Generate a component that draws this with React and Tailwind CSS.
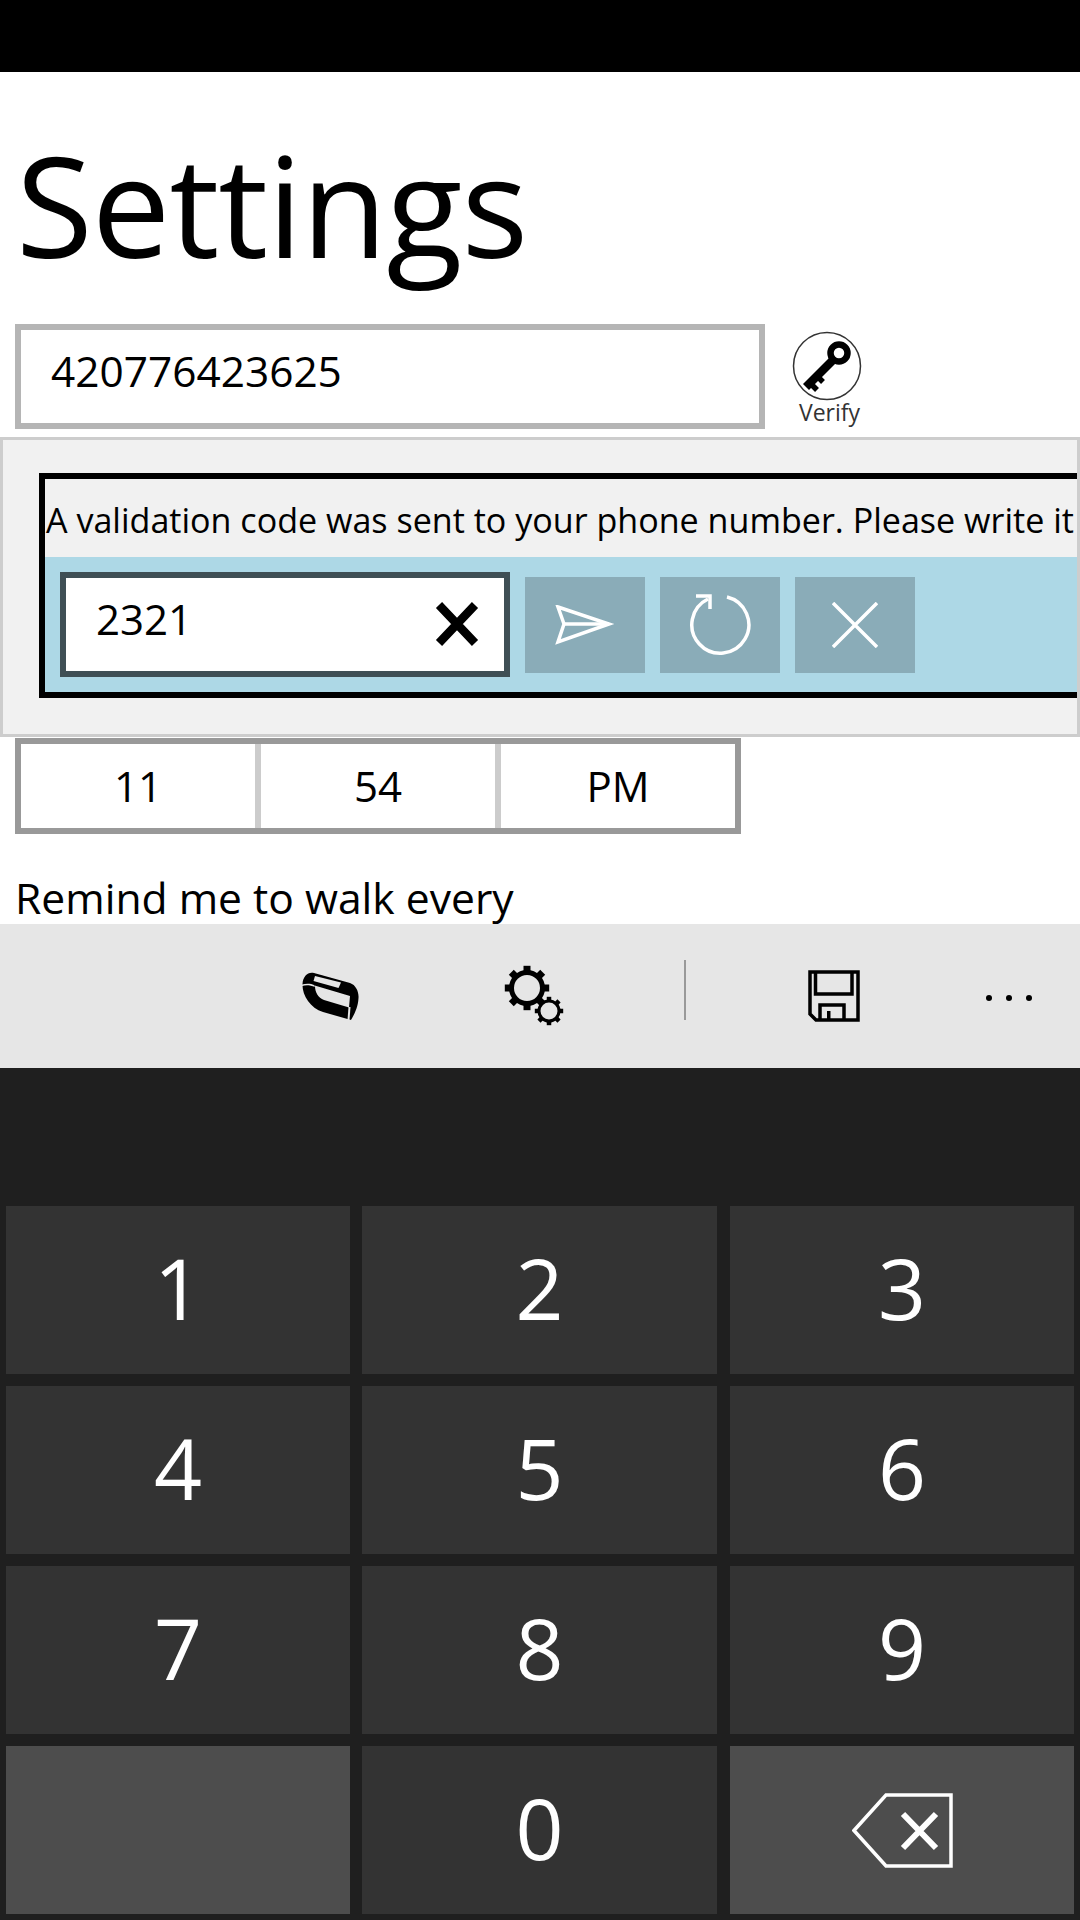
import React from "react";

const keys = [
  { label: "1" },
  { label: "2" },
  { label: "3" },
  { label: "4" },
  { label: "5" },
  { label: "6" },
  { label: "7" },
  { label: "8" },
  { label: "9" },
  { label: "", special: true },
  { label: "0" },
  { icon: true, special: true },
];

const KeyIcon = () => (
  <svg width="72" height="72" viewBox="0 0 72 72">
    <circle cx="35" cy="35" r="33.5" fill="white" stroke="#333" strokeWidth="1.5" />
    <path d="M41 29 L14 56" stroke="black" strokeWidth="8.5" />
    <path d="M17 51 l8 8 M24 44 l7 7" stroke="black" strokeWidth="5.5" />
    <circle cx="47" cy="22" r="8.5" fill="none" stroke="black" strokeWidth="6.5" />
  </svg>
);

const SendIcon = () => (
  <svg width="60" height="40" viewBox="0 0 60 40" fill="none" stroke="white" strokeWidth="3.5">
    <path d="M3 2 L54 19 L3 37 L9 19 Z" />
    <path d="M9 19 H54" />
  </svg>
);

const RefreshIcon = () => (
  <svg width="62" height="62" viewBox="0 0 62 62" fill="none" stroke="white" strokeWidth="3.5">
    <path d="M38 3 A28.5 28.5 0 1 1 19 5" />
    <path d="M7 2 H21 V15" />
  </svg>
);

const CloseIcon = () => (
  <svg width="46" height="46" viewBox="0 0 46 46" fill="none" stroke="white" strokeWidth="3.5">
    <path d="M1 1 L45 45 M45 1 L1 45" />
  </svg>
);

const BandIcon = () => (
  <svg width="70" height="60" viewBox="0 0 70 60">
    <path
      d="M7.5 19 C8 11 13 6.5 19 8 L55 18 C61 20 64 27 63.5 33 C63 42 60 48 56 55 L28 47 C15 43 7 30 7.5 19 Z"
      fill="black"
    />
    <path d="M20 11 L46 17.5 L43.5 23 L18.5 16 Z" fill="#e6e6e6" />
    <path d="M18 20 L55 31 L54 42.5 L29 35 C23 33 20 27 20 21 Z" fill="#e6e6e6" />
    <path d="M7 19.5 C11 18.5 16 18.5 19 20 L20 22 C15 20 11 20 7 21 Z" fill="#e6e6e6" />
    <path d="M53.5 42 L52.5 55 L54.5 55 L55.5 42 Z" fill="#e6e6e6" />
  </svg>
);

const Gear = ({ cx, cy, r, hole, tooth }) => (
  <g>
    {[0, 45, 90, 135, 180, 225, 270, 315].map((a) => (
      <rect
        key={a}
        x={cx - tooth / 2}
        y={cy - r - tooth * 0.6}
        width={tooth}
        height={tooth}
        fill="black"
        transform={`rotate(${a} ${cx} ${cy})`}
      />
    ))}
    <circle cx={cx} cy={cy} r={(r + hole) / 2} fill="none" stroke="black" strokeWidth={r - hole} />
  </g>
);

const GearsIcon = () => (
  <svg width="62" height="62" viewBox="0 0 62 62">
    <Gear cx={23} cy={23} r={18} hole={13} tooth={7} />
    <Gear cx={45} cy={46} r={11.5} hole={8.5} tooth={4.5} />
  </svg>
);

const SaveIcon = () => (
  <svg width="60" height="60" viewBox="0 0 60 60" fill="none" stroke="black" strokeWidth="3.5">
    <path d="M5 5 H53 V53 H11 L5 47 Z" />
    <path d="M10.5 5 V27 H47 V5" />
    <path d="M15 53 V38 H39 V53" />
    <rect x="22" y="44" width="3.5" height="9" fill="black" stroke="none" />
  </svg>
);

const BackspaceIcon = () => (
  <svg width="101" height="75" viewBox="0 0 101 75" fill="none" stroke="white">
    <path d="M34 2 H99 V73 H34 L2 37.5 Z" strokeWidth="3.5" />
    <path d="M51 21 L84 55 M84 21 L51 55" strokeWidth="6" />
  </svg>
);

const App = () => {
  return (
    <div className="w-[1080px] h-[1920px] overflow-hidden bg-white font-['Open_Sans',sans-serif] text-black flex flex-col">
      <div className="h-[72px] bg-black" />

      <div className="h-[252px] pl-[16px]">
        <h1 className="text-[140px] leading-[160px] font-normal mt-[52px] tracking-[-1px]">Settings</h1>
      </div>

      <div className="flex h-[105px]">
        <div className="ml-[15px] w-[750px] border-[6px] border-[#b5b5b5] pl-[30px] text-[42.4px] leading-[80px] flex items-start">
          <span className="mt-[1px]">420776423625</span>
        </div>
        <div className="ml-[28px] w-[70px] flex flex-col items-center pt-[7px]">
          <KeyIcon />
          <span className="text-[23px] leading-[30px] text-[#333] -mt-[6px] ml-[3px]">Verify</span>
        </div>
      </div>

      <div className="mt-[8px] h-[300px] border-[3px] border-[#cdcdcd] bg-[#f1f1f1] pl-[36px] pt-[33px] overflow-hidden">
        <div className="w-[1100px] h-[225px] border-[6px] border-black flex flex-col">
          <div className="h-[78px] pl-[1px] text-[34.1px] leading-[82px] whitespace-nowrap">
            A validation code was sent to your phone number. Please write it
          </div>
          <div className="flex-1 bg-[#add8e6] flex items-center pl-[15px]">
            <div className="w-[450px] h-[105px] border-[6px] border-[#3f4f55] bg-white flex items-center justify-between pl-[30px] pr-[24px]">
              <span className="text-[42px] -mt-[12px]">2321</span>
              <svg width="46" height="46" viewBox="0 0 46 46" fill="none" stroke="black" strokeWidth="8.5" className="-mt-[2px]">
                <path d="M5 4 L41 42 M41 4 L5 42" />
              </svg>
            </div>
            <div className="ml-[15px] flex gap-[15px]">
              <button className="w-[120px] h-[96px] bg-[#8aacb8] flex items-center justify-center">
                <SendIcon />
              </button>
              <button className="w-[120px] h-[96px] bg-[#8aacb8] flex items-center justify-center">
                <RefreshIcon />
              </button>
              <button className="w-[120px] h-[96px] bg-[#8aacb8] flex items-center justify-center">
                <CloseIcon />
              </button>
            </div>
          </div>
        </div>
      </div>

      <div className="ml-[15px] mt-[1px] w-[726px] h-[96px] border-[6px] border-[#999] flex text-[42px] leading-[84px]">
        <div className="flex-1 text-center border-r-[6px] border-[#ccc]">11</div>
        <div className="flex-1 text-center border-r-[6px] border-[#ccc]">54</div>
        <div className="flex-1 text-center">PM</div>
      </div>

      <div className="h-[90px] pl-[15px] pt-[34px] text-[42.6px] leading-[58px]">Remind me to walk every</div>

      <div className="h-[144px] bg-[#e6e6e6] flex items-center">
        <div className="ml-[295px] -mt-[2px]">
          <BandIcon />
        </div>
        <div className="ml-[139px]">
          <GearsIcon />
        </div>
        <div className="ml-[118px] w-[2px] h-[60px] bg-[#999] -mt-[12px]" />
        <div className="ml-[119px] mt-[2px]">
          <SaveIcon />
        </div>
        <div className="ml-[121px] flex gap-[14px] mt-[4px]">
          <span className="w-[6px] h-[6px] rounded-full bg-black" />
          <span className="w-[6px] h-[6px] rounded-full bg-black" />
          <span className="w-[6px] h-[6px] rounded-full bg-black" />
        </div>
      </div>

      <div className="flex-1 bg-[#1f1f1f] pt-[138px] pl-[6px] pr-[6px]">
        <div className="grid grid-cols-[344px_356px_344px] gap-x-[12px] grid-rows-[168px_168px_168px_168px] gap-y-[12px]">
          {keys.map((key, i) => (
            <div
              key={i}
              className={`flex items-center justify-center text-white text-[84px] leading-[164px] font-normal ${
                key.special ? "bg-[#4d4d4d]" : "bg-[#333333] pb-[4px]"
              } ${i % 3 === 1 ? "mr-[1px]" : ""}`}
            >
              {key.icon ? <BackspaceIcon /> : key.label}
            </div>
          ))}
        </div>
      </div>
    </div>
  );
};

export default App;
